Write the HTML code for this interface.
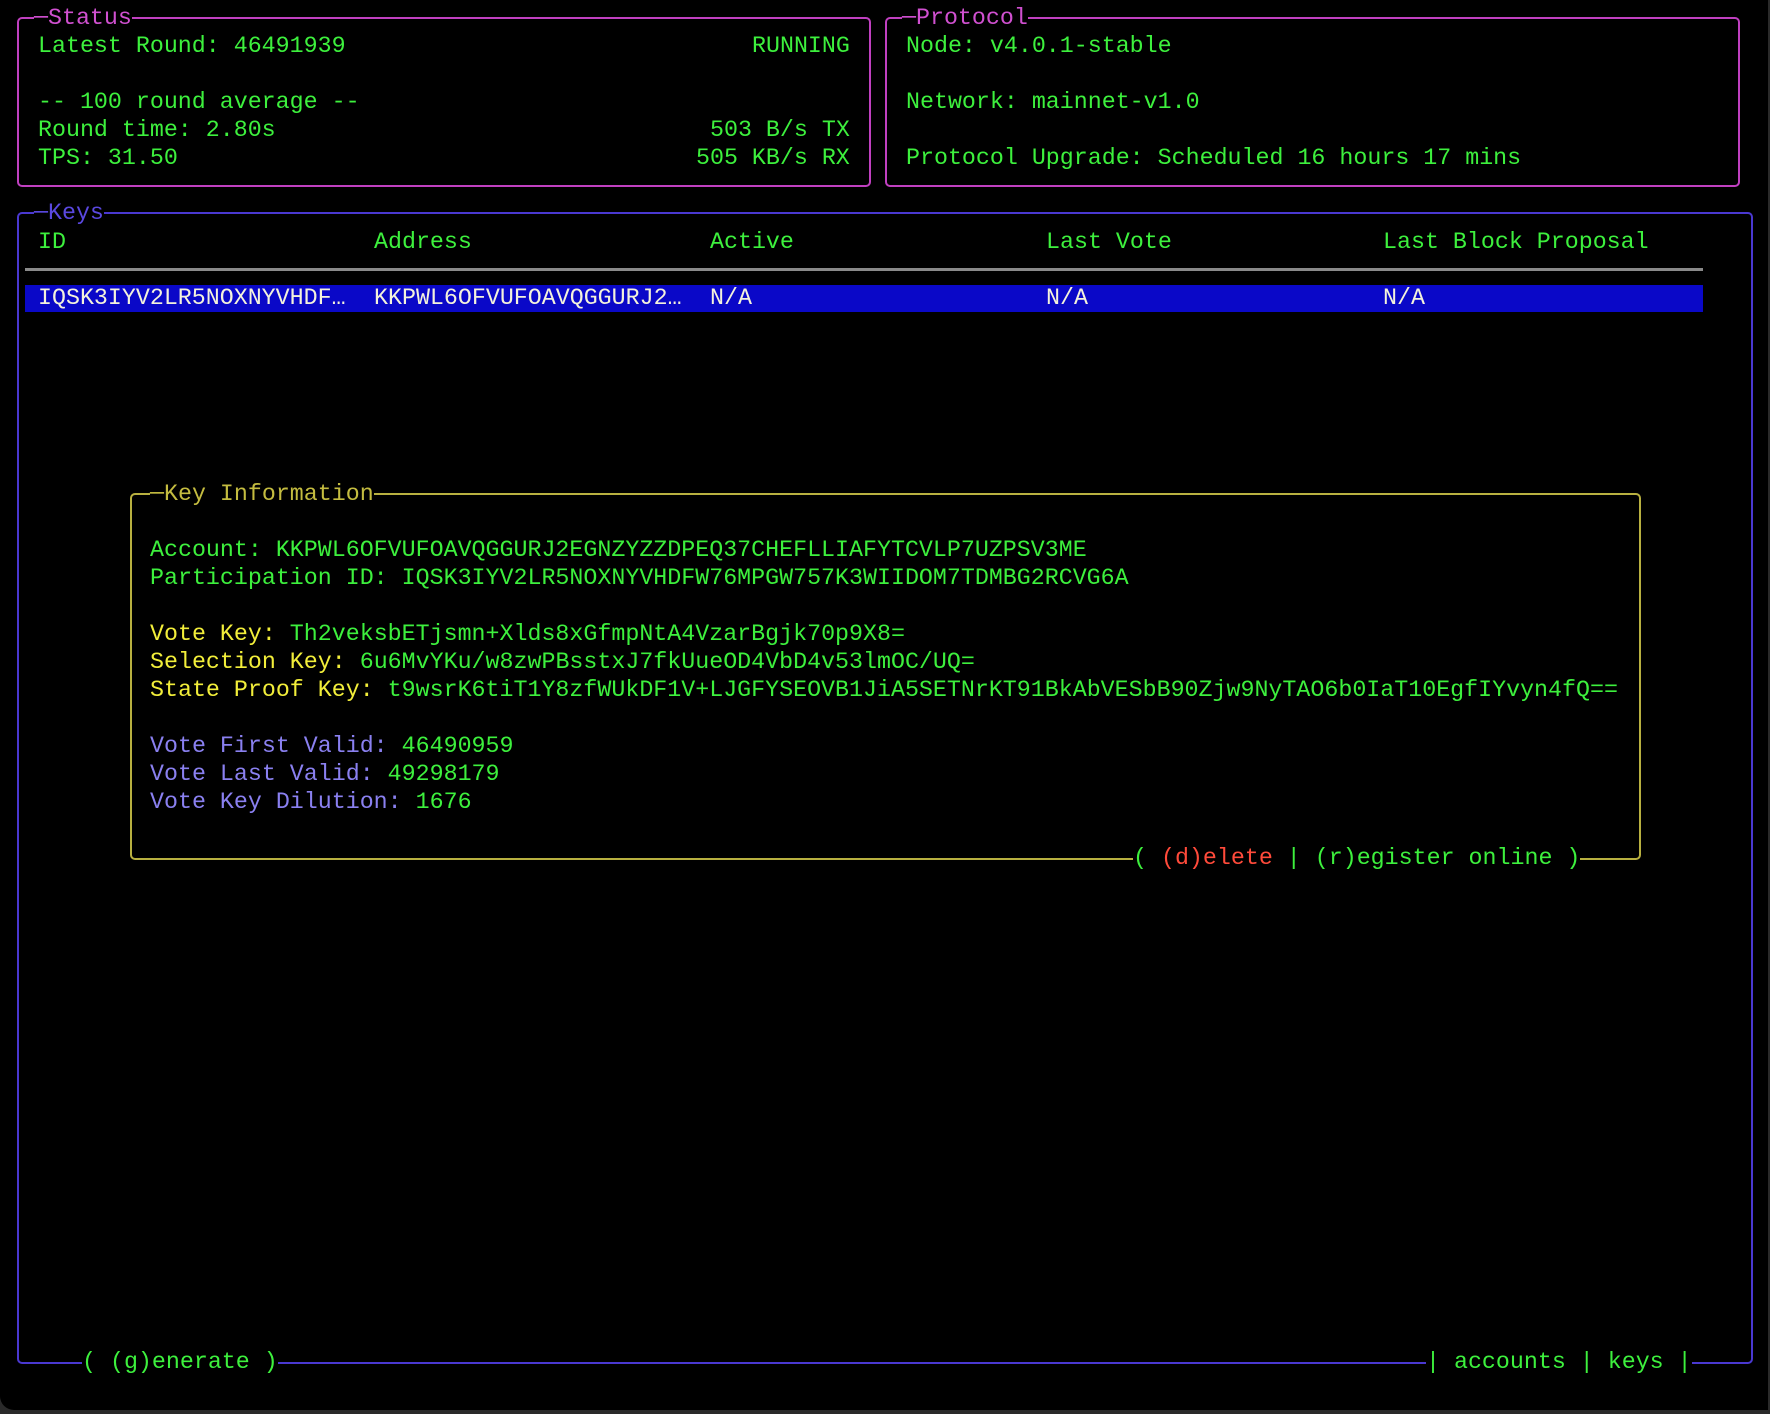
<!DOCTYPE html>
<html><head><meta charset="utf-8"><style>
html,body{margin:0;padding:0;background:#2a2a2a;}
#scr{position:absolute;left:0;top:0;width:1768px;height:1410px;background:#000;border-bottom-left-radius:14px;overflow:hidden;font-family:"Liberation Mono","DejaVu Sans Mono",monospace;font-size:23.3px;line-height:28px;}
.t{position:absolute;white-space:pre;color:#3df03d;}
.box{position:absolute;border:2px solid;border-radius:5px;box-sizing:border-box;}
.ttl{position:absolute;white-space:pre;background:#000;}
.g{color:#3df03d}.y{color:#f2ee3a}.l{color:#8a80f0}.r{color:#ff4a3a}
</style></head><body><div id="scr">
<div class="box" style="left:17px;top:17px;width:854px;height:170px;border-color:#c040c0"></div>
<div class="ttl" style="left:34px;top:4px;color:#d050d0">─Status</div>
<div class="t" style="left:38px;top:32px">Latest Round: 46491939</div>
<div class="t" style="left:752px;top:32px">RUNNING</div>
<div class="t" style="left:38px;top:88px">-- 100 round average --</div>
<div class="t" style="left:38px;top:116px">Round time: 2.80s</div>
<div class="t" style="left:710px;top:116px">503 B/s TX</div>
<div class="t" style="left:38px;top:144px">TPS: 31.50</div>
<div class="t" style="left:696px;top:144px">505 KB/s RX</div>

<div class="box" style="left:885px;top:17px;width:855px;height:170px;border-color:#c040c0"></div>
<div class="ttl" style="left:902px;top:4px;color:#d050d0">─Protocol</div>
<div class="t" style="left:906px;top:32px">Node: v4.0.1-stable</div>
<div class="t" style="left:906px;top:88px">Network: mainnet-v1.0</div>
<div class="t" style="left:906px;top:144px">Protocol Upgrade: Scheduled 16 hours 17 mins</div>

<div class="box" style="left:17px;top:212px;width:1736px;height:1152px;border-color:#4a38d0"></div>
<div class="ttl" style="left:34px;top:199px;color:#5a48e0">─Keys</div>
<div class="t" style="left:38px;top:228px">ID</div>
<div class="t" style="left:374px;top:228px">Address</div>
<div class="t" style="left:710px;top:228px">Active</div>
<div class="t" style="left:1046px;top:228px">Last Vote</div>
<div class="t" style="left:1383px;top:228px">Last Block Proposal</div>
<div style="position:absolute;left:25px;top:268px;width:1678px;height:3px;background:#8a8a8a"></div>
<div style="position:absolute;left:25px;top:285px;width:1678px;height:27px;background:#0a08c8"></div>
<div class="t" style="left:38px;top:284px;color:#f4f2dc">IQSK3IYV2LR5NOXNYVHDF…</div>
<div class="t" style="left:374px;top:284px;color:#f4f2dc">KKPWL6OFVUFOAVQGGURJ2…</div>
<div class="t" style="left:710px;top:284px;color:#f4f2dc">N/A</div>
<div class="t" style="left:1046px;top:284px;color:#f4f2dc">N/A</div>
<div class="t" style="left:1383px;top:284px;color:#f4f2dc">N/A</div>

<div class="box" style="left:130px;top:493px;width:1511px;height:367px;border-color:#b8b040"></div>
<div class="ttl" style="left:150px;top:480px;color:#c4bc40">─Key Information</div>
<div class="t" style="left:150px;top:536px">Account: KKPWL6OFVUFOAVQGGURJ2EGNZYZZDPEQ37CHEFLLIAFYTCVLP7UZPSV3ME</div>
<div class="t" style="left:150px;top:564px">Participation ID: IQSK3IYV2LR5NOXNYVHDFW76MPGW757K3WIIDOM7TDMBG2RCVG6A</div>
<div class="t" style="left:150px;top:620px"><span class="y">Vote Key:</span> Th2veksbETjsmn+Xlds8xGfmpNtA4VzarBgjk70p9X8=</div>
<div class="t" style="left:150px;top:648px"><span class="y">Selection Key:</span> 6u6MvYKu/w8zwPBsstxJ7fkUueOD4VbD4v53lmOC/UQ=</div>
<div class="t" style="left:150px;top:676px"><span class="y">State Proof Key:</span> t9wsrK6tiT1Y8zfWUkDF1V+LJGFYSEOVB1JiA5SETNrKT91BkAbVESbB90Zjw9NyTAO6b0IaT10EgfIYvyn4fQ==</div>
<div class="t" style="left:150px;top:732px"><span class="l">Vote First Valid:</span> 46490959</div>
<div class="t" style="left:150px;top:760px"><span class="l">Vote Last Valid:</span> 49298179</div>
<div class="t" style="left:150px;top:788px"><span class="l">Vote Key Dilution:</span> 1676</div>
<div class="ttl" style="left:1133px;top:844px;color:#3df03d">( <span class="r">(d)elete</span> | (r)egister online )</div>

<div class="ttl" style="left:82px;top:1348px;color:#3df03d">( (g)enerate )</div>
<div class="ttl" style="left:1426px;top:1348px;color:#3df03d">| accounts | keys |</div>
</div></body></html>
